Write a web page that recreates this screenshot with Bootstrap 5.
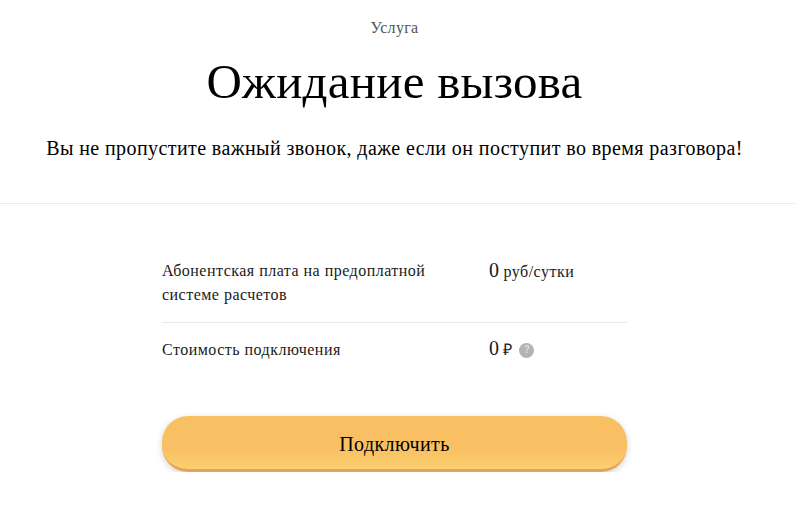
<!DOCTYPE html>
<html lang="ru">
<head>
  <meta charset="UTF-8">
  <title>Ожидание вызова</title>
  <link href="https://cdn.jsdelivr.net/npm/bootstrap@5.3.3/dist/css/bootstrap.min.css" rel="stylesheet">
  <style>
    body { font-family: "Liberation Serif", serif; color: #000; background: #fff; overflow: hidden; }
    .head-block { height: 204px; padding: 18px 6px 0 0; border-bottom: 1px solid #ebebeb; }
    .kicker { font-size: 16px; line-height: 20px; color: #555; letter-spacing: .3px; }
    .main-title { font-family: "Liberation Serif", serif; font-size: 49px; line-height: 58px; margin: 15px 0 24px; font-weight: 400; letter-spacing: .25px; }
    .sub-title { font-size: 20px; line-height: 26px; letter-spacing: .41px; }
    .price-wrap { width: 465px; margin-left: 162px; padding-top: 55px; }
    .price-row { display: flex; font-size: 16px; line-height: 24px; letter-spacing: .48px; color: #1a1a1a; }
    .price-row.first-row { border-bottom: 1px solid #ebe8e2; padding-bottom: 15px; }
    .price-row.first-row .price-val { margin-top: -1px; }
    .price-row.second-row { padding-top: 15px; }
    .price-row.second-row .price-val { margin-top: -2px; }
    .price-name { width: 327px; }
    .price-val b { font-weight: 400; font-size: 20px; letter-spacing: 0; }
    .help-dot { display: inline-flex; width: 15px; height: 15px; border-radius: 50%; background: #b3b3b3; color: #ddd; font-size: 10px; font-weight: 700; font-family: "Liberation Sans", sans-serif; align-items: center; justify-content: center; margin-left: 2px; vertical-align: 2px; }
    .btn-connect { display: block; width: 465px; height: 56px; margin-top: 54px; padding-top: 8px; border: 0; border-bottom: 3px solid #e3a35f; border-radius: 26px; font-size: 20px; letter-spacing: .4px; color: #000; background: linear-gradient(#f8c063 60%, #fdcf6e); box-shadow: 0 2px 6px rgba(0,0,0,.18); }
    .btn-connect:hover { background: linear-gradient(#f8c063 60%, #fdcf6e); color: #000; border-bottom: 3px solid #e3a35f; }
  </style>
</head>
<body>
  <div class="head-block text-center">
    <div class="kicker">Услуга</div>
    <h1 class="main-title">Ожидание вызова</h1>
    <div class="sub-title">Вы не пропустите важный звонок, даже если он поступит во время разговора!</div>
  </div>
  <div class="price-wrap">
    <div class="price-row first-row">
      <div class="price-name">Абонентская плата на предоплатной<br>системе расчетов</div>
      <div class="price-val"><b>0</b> руб/сутки</div>
    </div>
    <div class="price-row second-row">
      <div class="price-name">Стоимость подключения</div>
      <div class="price-val"><b>0</b> ₽ <span class="help-dot">?</span></div>
    </div>
    <button class="btn btn-connect" type="button">Подключить</button>
  </div>
  <script src="https://cdn.jsdelivr.net/npm/bootstrap@5.3.3/dist/js/bootstrap.bundle.min.js"></script>
</body>
</html>
